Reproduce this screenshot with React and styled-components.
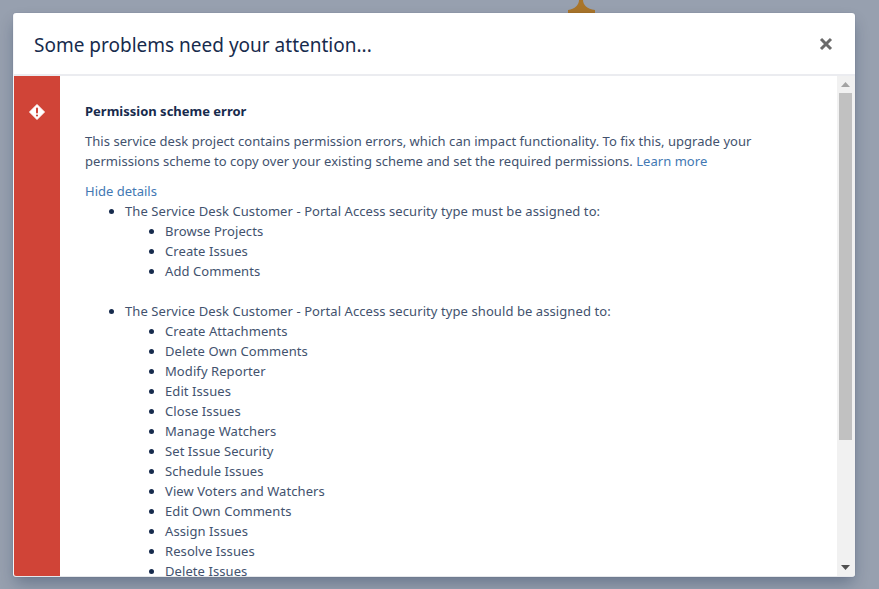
import React from "react";
import styled, { createGlobalStyle } from "styled-components";

const GlobalStyle = createGlobalStyle`
  html, body {
    margin: 0;
    height: 100%;
    overflow: hidden;
  }
  body {
    background: #97a0af;
    font-family: "Noto Sans", "Open Sans", sans-serif;
    color: #42526e;
  }
`;

const Backdrop = styled.div`
  position: relative;
  width: 879px;
  height: 589px;
  padding: 13px 24px 12px 13px;
  box-sizing: border-box;
  background: #97a0af;
`;

const Peek = styled.svg`
  position: absolute;
  left: 567px;
  top: 0;
`;

const Modal = styled.div`
  position: relative;
  display: flex;
  flex-direction: column;
  height: 564px;
  box-sizing: border-box;
  border-radius: 3px;
  border-left: 1px solid #f4f5f7;
  border-bottom: 1px solid #e6e8ec;
  background: #fff;
  overflow: hidden;
  box-shadow: 0 0 1px rgba(9, 30, 66, 0.31), 0 8px 16px -2px rgba(9, 30, 66, 0.32);
`;

const Header = styled.header`
  display: flex;
  align-items: center;
  justify-content: space-between;
  flex: none;
  height: 63px;
  box-sizing: border-box;
  padding: 2px 22px 0 20px;
  border-bottom: 2px solid #ebecf0;
`;

const Title = styled.h1`
  margin: 0;
  font-size: 19px;
  font-weight: 400;
  line-height: 24px;
  color: #172b4d;
`;

const CloseIcon = styled.svg`
  display: block;
  margin-top: -2px;
  color: #6b6b6b;
`;

const Body = styled.div`
  flex: 1;
  min-height: 0;
  display: flex;
`;

const Side = styled.div`
  flex: none;
  width: 46px;
  background: #d04437;
  display: flex;
  justify-content: center;
  padding-top: 28px;
  box-sizing: border-box;
`;

const Content = styled.div`
  flex: 1;
  min-width: 0;
  overflow: hidden;
  padding: 25px 20px 0 25px;
  font-size: 13px;
  line-height: 20px;
`;

const Heading = styled.h2`
  margin: 0 0 10px;
  font-size: 13px;
  font-weight: 700;
  line-height: 20px;
  color: #172b4d;
`;

const Paragraph = styled.p`
  margin: 0 0 10px;
  letter-spacing: 0.04px;
`;

const Link = styled.a`
  color: #4278b3;
  text-decoration: none;
`;

const List = styled.ul`
  margin: 0;
  padding-left: 40px;
  list-style-type: disc;
  letter-spacing: 0.08px;
`;

const Item = styled.li`
  &::marker {
    color: #172b4d;
  }
`;

const Group = styled(Item)`
  margin-bottom: ${({ $last }) => ($last ? "0" : "20px")};
`;

const Scrollbar = styled.div`
  flex: none;
  width: 18px;
  padding-right: 1px;
  background: #f1f1f1;
  display: flex;
  flex-direction: column;
  align-items: center;
  box-sizing: border-box;
`;

const ArrowCell = styled.div`
  flex: none;
  height: 17px;
  display: flex;
  align-items: center;
  justify-content: center;
`;

const Thumb = styled.div`
  flex: none;
  width: 13px;
  height: 347px;
  background: #c1c1c1;
`;

const Spacer = styled.div`
  flex: 1;
`;

const must = ["Browse Projects", "Create Issues", "Add Comments"];
const should = [
  "Create Attachments",
  "Delete Own Comments",
  "Modify Reporter",
  "Edit Issues",
  "Close Issues",
  "Manage Watchers",
  "Set Issue Security",
  "Schedule Issues",
  "View Voters and Watchers",
  "Edit Own Comments",
  "Assign Issues",
  "Resolve Issues",
  "Delete Issues",
];

export default function App() {
  return (
    <>
      <GlobalStyle />
      <Backdrop>
        <Peek width="28" height="13" viewBox="0 0 28 13">
          <path d="M12 0h4C16 5 20 9 28 10v3H1v-3C8 9 12 5 12 0z" fill="#a9752a" />
        </Peek>
        <Modal>
          <Header>
            <Title>Some problems need your attention...</Title>
            <CloseIcon width="14" height="14" viewBox="0 0 14 14">
              <path d="M2 2l10 10M12 2L2 12" stroke="currentColor" strokeWidth="3" />
            </CloseIcon>
          </Header>
          <Body>
            <Side>
              <svg width="16" height="16" viewBox="0 0 16 16">
                <path d="M8 .5l7.5 7.5L8 15.5.5 8z" fill="#fff" stroke="#fff" strokeLinejoin="round" />
                <rect x="7" y="3.5" width="2" height="6" rx="1" fill="#d04437" />
                <circle cx="8" cy="11.5" r="1.1" fill="#d04437" />
              </svg>
            </Side>
            <Content>
              <Heading>Permission scheme error</Heading>
              <Paragraph>
                This service desk project contains permission errors, which can impact functionality. To fix this, upgrade your
                permissions scheme to copy over your existing scheme and set the required permissions. <Link href="#">Learn more</Link>
              </Paragraph>
              <Link href="#">Hide details</Link>
              <List>
                <Group>
                  The Service Desk Customer - Portal Access security type must be assigned to:
                  <List>
                    {must.map((name) => (
                      <Item key={name}>{name}</Item>
                    ))}
                  </List>
                </Group>
                <Group $last>
                  The Service Desk Customer - Portal Access security type should be assigned to:
                  <List>
                    {should.map((name) => (
                      <Item key={name}>{name}</Item>
                    ))}
                  </List>
                </Group>
              </List>
            </Content>
            <Scrollbar>
              <ArrowCell>
                <svg width="9" height="5" viewBox="0 0 9 5"><path d="M4.5 0L9 5H0z" fill="#a3a3a3" /></svg>
              </ArrowCell>
              <Thumb />
              <Spacer />
              <ArrowCell>
                <svg width="9" height="5" viewBox="0 0 9 5"><path d="M0 0h9L4.5 5z" fill="#505050" /></svg>
              </ArrowCell>
            </Scrollbar>
          </Body>
        </Modal>
      </Backdrop>
    </>
  );
}
